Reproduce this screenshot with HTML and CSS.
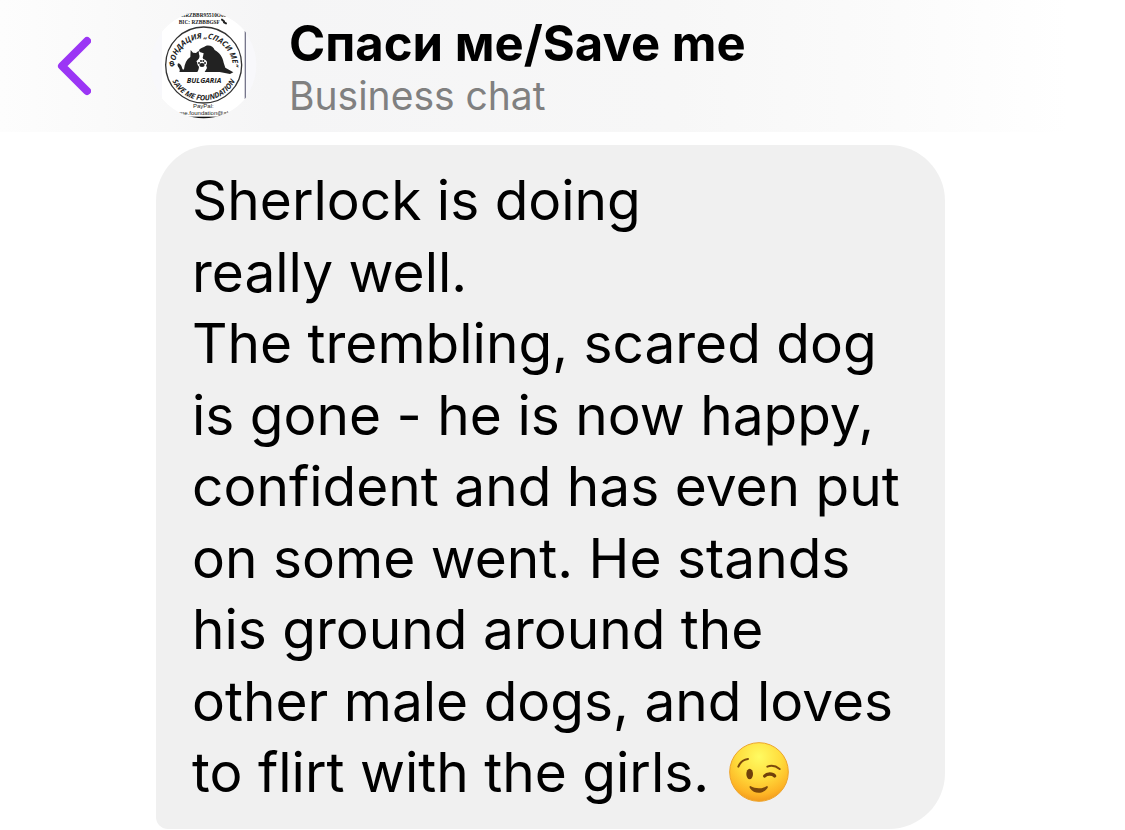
FILE: index.html
```html
<!DOCTYPE html>
<html lang="en">
<head>
	<meta charset="utf-8">
	<meta name="viewport" content="width=device-width, initial-scale=1">
	<title>Спаси ме/Save me</title>
	<link rel="stylesheet" href="styles.css">
</head>
<body>
	<header class="chat-header">
		<button class="back" type="button" aria-label="Back">
			<svg width="34" height="60" viewBox="0 0 34 60"><path d="M30 5 L5 30 L30 55"/></svg>
		</button>
		<svg class="avatar" width="108" height="108" viewBox="30 39 324 324" role="img" aria-label="Save me foundation">
			<defs>
				<clipPath id="round"><circle cx="191" cy="198" r="160"/></clipPath>
				<path id="top-arc" d="M103 206 A88 88 0 1 1 279 206"/>
				<path id="bottom-arc" d="M85 198 A106 106 0 0 0 297 198"/>
			</defs>
			<circle cx="191" cy="198" r="158" fill="#f8f8fb"/>
			<g clip-path="url(#round)">
				<path d="M120 39 H262 L317 96 V300 L270 358 H120 L66 300 V96 Z" fill="#fff"/>
				<path d="M316 96 V300" stroke="#77778c" stroke-width="4"/>
				<rect x="140" y="353" width="98" height="8" fill="#111"/>
				<g class="papers">
					<text x="191" y="55">HRZBBR95510O08</text>
					<text x="178" y="75">BIC: RZBBBGSF</text>
				</g>
				<path d="M246 62 l6 5 M252 70 l6 3" stroke="#222" stroke-width="6" stroke-linecap="round"/>
				<circle cx="191" cy="198" r="114" fill="none" stroke="#333" stroke-width="4"/>
				<g class="ring">
					<text class="ring-top"><textPath href="#top-arc" startOffset="50%">ФОНДАЦИЯ „СПАСИ МЕ“</textPath></text>
					<text><textPath href="#bottom-arc" startOffset="50%">SAVE ME FOUNDATION</textPath></text>
					<text x="192" y="251">BULGARIA</text>
				</g>
				<!-- cat -->
				<path d="M114 193 C108 204 124 208 118 219 H172 C180 207 178 196 169 187 C176 182 181 174 177 166 L176 155 L168 162 L159 161 L152 153 L151 174 C140 181 134 193 132 211 C125 214 129 203 119 194 Z" fill="#222"/>
				<!-- dog -->
				<path d="M177 153 C181 147 191 146 197 141 C209 136 221 144 224 153 C238 160 248 174 251 191 L256 206 L280 220 L270 225 L239 219 H194 L201 207 L195 190 L188 176 L191 163 L179 159 Z" fill="#222"/>
				<path d="M185 209 C173 202 169 194 174 186 C180 178 194 178 200 187 C204 197 196 204 185 209 Z" fill="#fff"/>
				<g fill="#222">
					<ellipse cx="186" cy="198" rx="8" ry="6"/>
					<circle cx="177" cy="192" r="3"/>
					<circle cx="183" cy="186" r="3"/>
					<circle cx="190" cy="186" r="3"/>
					<circle cx="195" cy="192" r="3"/>
				</g>
				<g class="paypal">
					<text x="190" y="327">PayPal:</text>
					<text x="194" y="347">me.foundation@ab</text>
				</g>
			</g>
		</svg>
		<div class="who">
			<h1 class="name">Спаси ме/Save me</h1>
			<p class="kind">Business chat</p>
		</div>
	</header>
	<main class="thread">
		<p class="bubble">
			Sherlock is doing<br>
			really well.<br>
			The trembling, scared dog<br>
			is gone - he is now happy,<br>
			confident and has even put<br>
			on some went. He stands<br>
			his ground around the<br>
			other male dogs, and loves<br>
			to flirt with the girls.
			<svg class="wink" width="60" height="60" viewBox="0 0 180 180" role="img" aria-label="Winking face">
				<defs>
					<radialGradient id="face" cx="50%" cy="24%" r="76%">
						<stop offset="0" stop-color="#fffb62"/>
						<stop offset="0.5" stop-color="#ffdc3c"/>
						<stop offset="0.85" stop-color="#fdb425"/>
						<stop offset="1" stop-color="#f29a1c"/>
					</radialGradient>
				</defs>
				<circle cx="90" cy="90" r="88" fill="url(#face)" stroke="#eda52c" stroke-width="3"/>
				<ellipse cx="62" cy="96" rx="10" ry="16" fill="#70400b"/>
				<path d="M28 74 C33 61 43 53 57 51" fill="none" stroke="#7c4a0c" stroke-width="6" stroke-linecap="round"/>
				<path d="M115 74 C127 69 141 72 152 81" fill="none" stroke="#7c4a0c" stroke-width="6" stroke-linecap="round"/>
				<path d="M107 102 C114 94 131 94 137 102" fill="none" stroke="#70400b" stroke-width="10" stroke-linecap="round"/>
				<path d="M64 132 C80 141 99 141 114 132 C117 132 117 136 115 139 C103 157 75 157 63 139 C61 135 61 132 64 132 Z" fill="#7c480b"/>
			</svg>
		</p>
	</main>
</body>
</html>
```

FILE: styles.css
```css
body {
	margin: 0;
	background-color: #fff;
	color: #000;
	font-family: Inter, "Liberation Sans", sans-serif;
}
.chat-header {
	display: flex;
	align-items: center;
	height: 132px;
	background: linear-gradient(to right, #fdfdfd, #f9f9f9 12%, #f5f5f6 24%, #f7f7f7 60%, #fbfbfb 80%, #fff 95%);
}
.back {
	margin: 0 0 0 57px;
	padding: 0;
	border: 0;
	background: none;
	cursor: pointer;
}
.back svg {
	display: block;
}
.back path {
	fill: none;
	stroke: #9b36f5;
	stroke-width: 8;
	stroke-linecap: round;
	stroke-linejoin: round;
}
.avatar {
	flex: none;
	margin-left: 59px;
}
.avatar text {
	fill: #222;
	text-anchor: middle;
}
.papers {
	font: bold 16px "Liberation Serif", serif;
}
.ring {
	font: italic bold 22px "Open Sans", sans-serif;
}
.ring-top {
	font-size: 23px;
}
.paypal {
	font: 18px "Liberation Sans", sans-serif;
}
.who {
	padding-top: 4px;
	margin-left: 31px;
}
.name {
	margin: 0;
	font-size: 49px;
	font-weight: 700;
	line-height: 56px;
}
.kind {
	margin: 0;
	color: #808080;
	font-size: 39px;
	line-height: 48px;
}
.thread {
	padding: 13px 16% 0 156px;
}
.bubble {
	box-sizing: border-box;
	width: fit-content;
	min-width: 100%;
	margin: 0;
	padding: 20px 36px;
	border-radius: 56px 56px 56px 12px;
	background-color: #f0f0f0;
	font-size: 55px;
	line-height: 1.3;
	white-space: nowrap;
}
.wink {
	margin-left: 4px;
	vertical-align: -10px;
}
```
